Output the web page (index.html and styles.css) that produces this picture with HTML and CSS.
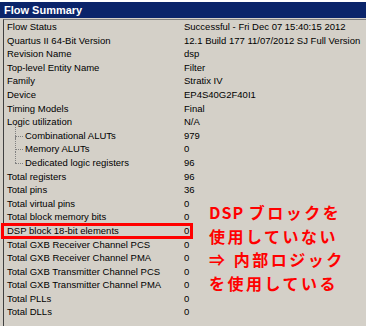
FILE: index.html
```html
<!DOCTYPE html>
<html lang="ja">
<head>
    <meta charset="UTF-8" />
    <title>Flow Summary</title>
    <link rel="stylesheet" href="styles.css">
</head>
<body>
<div class="window">
    <div class="titlebar">Flow Summary</div>
    <div class="panel">
        <div class="tabla">
            <div class="fila"><span class="nombre">Flow Status</span><span class="valor">Successful - Fri Dec 07 15:40:15 2012</span></div>
            <div class="fila"><span class="nombre">Quartus II 64-Bit Version</span><span class="valor">12.1 Build 177 11/07/2012 SJ Full Version</span></div>
            <div class="fila"><span class="nombre">Revision Name</span><span class="valor">dsp</span></div>
            <div class="fila"><span class="nombre">Top-level Entity Name</span><span class="valor">Filter</span></div>
            <div class="fila"><span class="nombre">Family</span><span class="valor">Stratix IV</span></div>
            <div class="fila"><span class="nombre">Device</span><span class="valor">EP4S40G2F40I1</span></div>
            <div class="fila"><span class="nombre">Timing Models</span><span class="valor">Final</span></div>
            <div class="fila"><span class="nombre">Logic utilization</span><span class="valor">N/A</span></div>
            <div class="fila hijo"><span class="nombre">Combinational ALUTs</span><span class="valor">979</span></div>
            <div class="fila hijo"><span class="nombre">Memory ALUTs</span><span class="valor">0</span></div>
            <div class="fila hijo ultimo"><span class="nombre">Dedicated logic registers</span><span class="valor">96</span></div>
            <div class="fila"><span class="nombre">Total registers</span><span class="valor">96</span></div>
            <div class="fila"><span class="nombre">Total pins</span><span class="valor">36</span></div>
            <div class="fila"><span class="nombre">Total virtual pins</span><span class="valor">0</span></div>
            <div class="fila"><span class="nombre">Total block memory bits</span><span class="valor">0</span></div>
            <div class="fila marcada"><span class="nombre">DSP block 18-bit elements</span><span class="valor">0</span></div>
            <div class="fila"><span class="nombre">Total GXB Receiver Channel PCS</span><span class="valor">0</span></div>
            <div class="fila"><span class="nombre">Total GXB Receiver Channel PMA</span><span class="valor">0</span></div>
            <div class="fila"><span class="nombre">Total GXB Transmitter Channel PCS</span><span class="valor">0</span></div>
            <div class="fila"><span class="nombre">Total GXB Transmitter Channel PMA</span><span class="valor">0</span></div>
            <div class="fila"><span class="nombre">Total PLLs</span><span class="valor">0</span></div>
            <div class="fila"><span class="nombre">Total DLLs</span><span class="valor">0</span></div>
        </div>
        <!-- Nota en rojo sobre la tabla -->
        <div class="nota"><span class="latin">DSP </span>ブロックを<br>使用していない<br>⇒ 内部ロジック<br>を使用している</div>
    </div>
</div>
</body>
</html>
```

FILE: styles.css
```css
body {
    margin: 0;
    background-color: #fff;
    font-family: "Liberation Sans", Arial, sans-serif;
}

.window {
    width: 366px;
    padding-top: 2px;
}

.titlebar {
    height: 16px;
    line-height: 16px;
    background-color: #0a246a;
    color: #fff;
    font-weight: bold;
    font-size: 11px;
    padding-left: 4px;
}

.panel {
    position: relative;
    height: 308px;
    background-color: #d4d0c8;
    padding: 1px 0 0 3px;
    box-sizing: border-box;
}

.tabla {
    height: 100%;
    border-left: 1px solid #404040;
    border-top: 1px solid #808080;
    padding-left: 3px;
    font-size: 9.5px;
    color: #000;
}

.fila {
    display: flex;
    height: 13.6px;
    line-height: 13.6px;
    position: relative;
}

.nombre {
    width: 177px;
    white-space: nowrap;
}

.valor {
    white-space: nowrap;
}

.hijo .nombre {
    padding-left: 18px;
    width: 159px;
}

/* lineas del arbol */
.hijo::before {
    content: "";
    position: absolute;
    left: 8px;
    top: -4px;
    height: 13.6px;
    border-left: 1px dotted #808080;
}

.hijo::after {
    content: "";
    position: absolute;
    left: 8px;
    top: 7px;
    width: 8px;
    border-top: 1px dotted #808080;
}

.ultimo::before {
    height: 11px;
}

.marcada::before {
    content: "";
    position: absolute;
    left: -6px;
    top: -1px;
    width: 186px;
    height: 10px;
    border: 3px solid #ff0000;
}

.nota {
    position: absolute;
    left: 209px;
    top: 183px;
    color: #ff0000;
    font-family: "Noto Sans CJK JP", sans-serif;
    font-weight: bold;
    font-size: 16px;
    line-height: 23.5px;
    letter-spacing: 2.5px;
}

.nota .latin {
    letter-spacing: 1px;
}
```
